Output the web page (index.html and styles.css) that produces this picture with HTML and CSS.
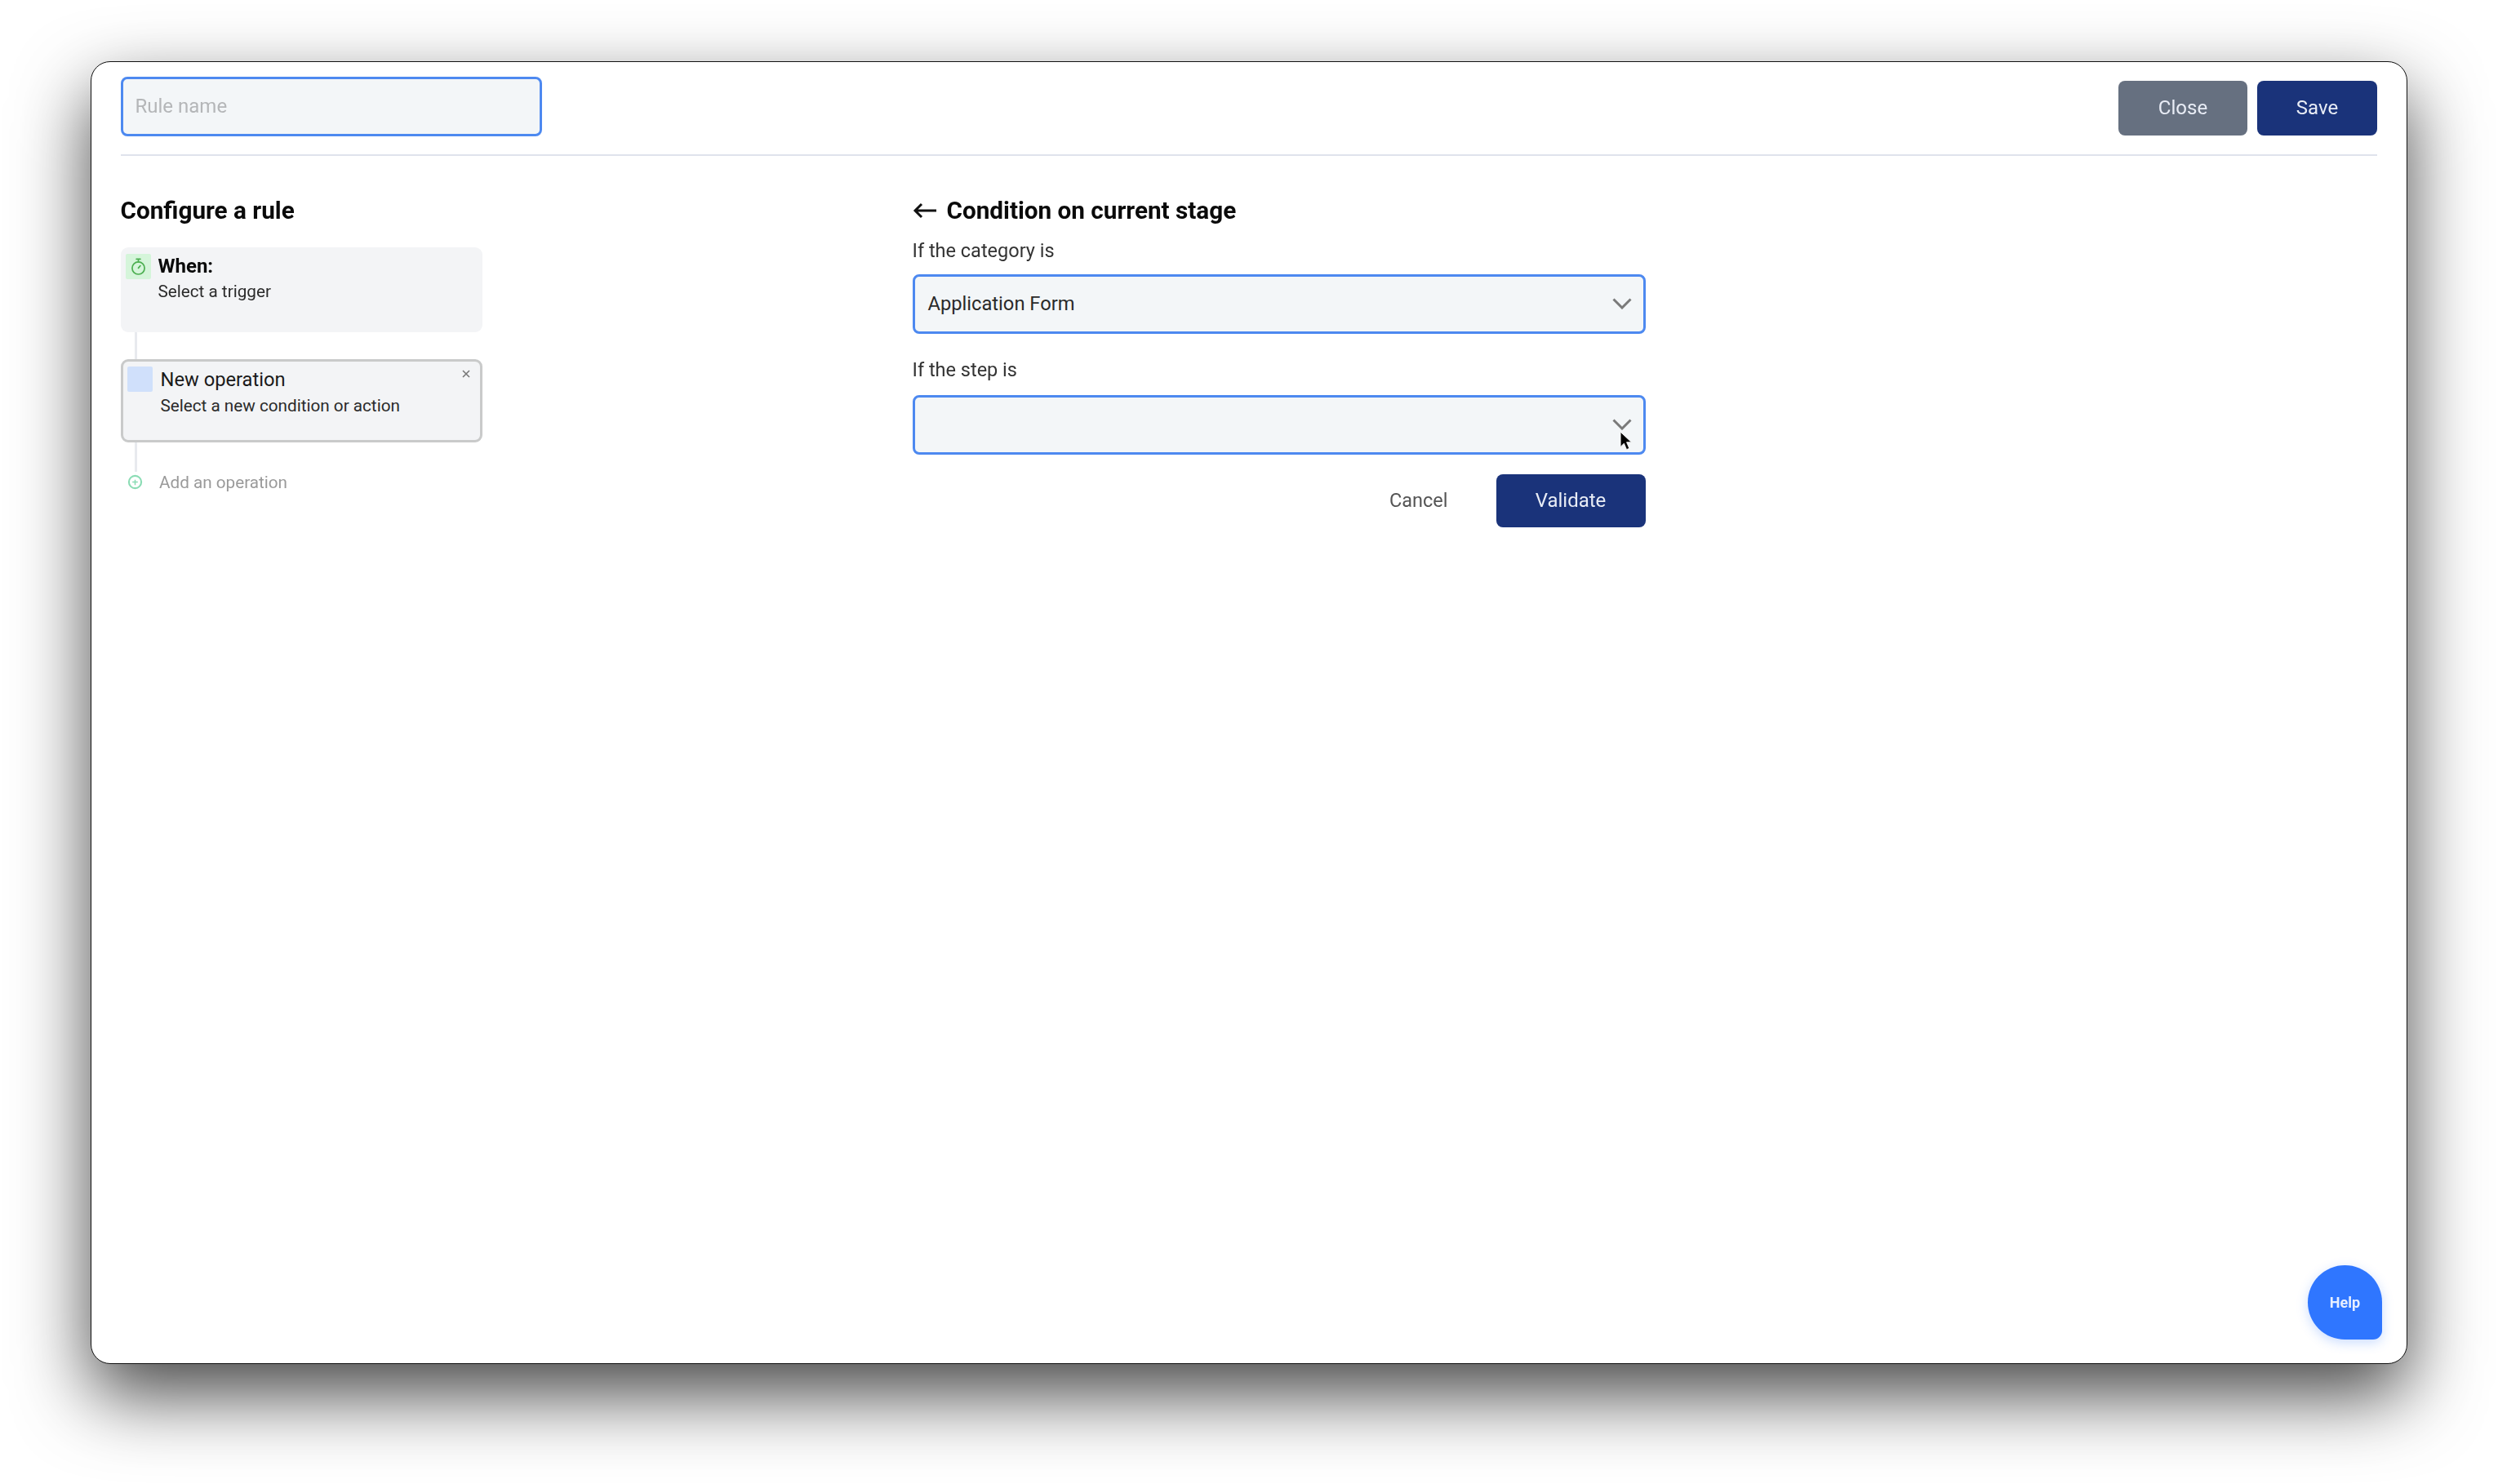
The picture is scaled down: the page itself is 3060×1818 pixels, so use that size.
FILE: index.html
```html
<!DOCTYPE html>
<html lang="en">
<head>
<meta charset="utf-8">
<title>Configure a rule</title>
<link rel="stylesheet" href="styles.css">
</head>
<body>
<div class="window">
  <header class="topbar">
    <div class="rule-input">Rule name</div>
    <div class="top-actions">
      <button class="btn btn-grey">Close</button>
      <button class="btn btn-navy btn-save">Save</button>
    </div>
  </header>
  <main class="content">
    <section class="left">
      <h2 class="heading">Configure a rule</h2>
      <div class="card card-when">
        <span class="icon-box icon-green">
          <svg viewBox="0 0 20 22" width="19" height="21" fill="none" stroke="#4caf50" stroke-width="1.8" stroke-linecap="round"><circle cx="10" cy="13" r="8"/><path d="M7.500 1.500h5M10 1.500V5M10 13l2.500-3"/></svg>
        </span>
        <div class="card-text">
          <div class="card-title-bold">When:</div>
          <div class="card-sub">Select a trigger</div>
        </div>
      </div>
      <div class="connector connector-a"></div>
      <div class="card card-new">
        <span class="icon-box icon-blue"></span>
        <div class="card-text">
          <div class="card-title">New operation</div>
          <div class="card-sub card-sub-new">Select a new condition or action</div>
        </div>
        <svg class="close-x" viewBox="0 0 10 10" width="10" height="10" fill="none" stroke="#777" stroke-width="1.6"><path d="M1 1l8 8M9 1l-8 8"/></svg>
      </div>
      <div class="connector connector-b"></div>
      <div class="add-row">
        <svg class="add-icon" viewBox="0 0 20 20" width="19" height="19" fill="none" stroke="#8adcb4" stroke-width="2.2"><circle cx="10" cy="10" r="8"/><path d="M10 14V7M6.500 10h7" stroke-width="1.600"/></svg>
        <span class="add-text">Add an operation</span>
      </div>
    </section>
    <section class="right">
      <h2 class="heading heading-back">
        <svg class="back" viewBox="0 0 30 20" width="30" height="20" fill="none" stroke="#111" stroke-width="3"><path d="M29 10H3M11 2l-8 8 8 8"/></svg>
        Condition on current stage
      </h2>
      <label class="field-label label-first">If the category is</label>
      <div class="select">
        <span>Application Form</span>
        <svg class="chev" viewBox="0 0 24 14" width="24" height="14" fill="none" stroke="#7a7a7a" stroke-width="3"><path d="M1.500 1.500L12 12 22.500 1.500"/></svg>
      </div>
      <label class="field-label label-second">If the step is</label>
      <div class="select">
        <span></span>
        <svg class="chev" viewBox="0 0 24 14" width="24" height="14" fill="none" stroke="#7a7a7a" stroke-width="3"><path d="M1.500 1.500L12 12 22.500 1.500"/></svg>
        <svg class="cursor" viewBox="0 0 14 22" width="15" height="24"><path d="M1 0v17l4-4 3 7 3-1.300-3-7h5.500z" fill="#000" stroke="#fff" stroke-width=".8"/></svg>
      </div>
      <div class="form-actions">
        <button class="btn btn-plain">Cancel</button>
        <button class="btn btn-navy btn-validate">Validate</button>
      </div>
    </section>
  </main>
  <button class="help">Help</button>
</div>
</body>
</html>
```
FILE: styles.css
```css
* { box-sizing: border-box; }
html, body { margin: 0; height: 100%; }
body {
  background: #fff;
  padding: 75px 0 0 111px;
  font-family: Roboto, "Liberation Sans", sans-serif;
  color: #111;
  overflow: hidden;
}
.window {
  position: relative;
  width: 2838px;
  height: 1596px;
  background: #fff;
  border: 1.5px solid #111;
  border-radius: 24px;
  box-shadow: 0 38px 90px rgba(0, 0, 0, .72);
  padding: 17.5px 36px 0 35.5px;
}
.topbar, .content, .help { filter: blur(.6px); }
.topbar {
  display: flex;
  justify-content: space-between;
  align-items: flex-start;
  height: 97px;
  border-bottom: 2px solid #dfe3ec;
}
.rule-input {
  width: 516px;
  height: 73px;
  background: #f3f6f8;
  border: 3.5px solid #4d89f0;
  border-radius: 8px;
  padding-left: 15px;
  line-height: 66px;
  font-size: 24px;
  color: #b4b6b8;
}
.top-actions { display: flex; gap: 12px; padding-top: 5px; }
.btn {
  font-family: inherit;
  font-size: 24px;
  border: 0;
  border-radius: 8px;
  color: #e8ecf5;
  height: 67px;
  padding: 0;
}
.btn-grey { width: 158px; background: #667080; }
.btn-navy { background: #1a337a; }
.btn-save { width: 147px; }
.content { display: flex; padding-top: 48px; }
.left { width: 970px; }
.right { width: 898px; }
.heading {
  margin: 0;
  font-size: 29.700px;
  line-height: 38px;
  font-weight: 700;
  color: #0a0a0a;
}
.heading-back { display: flex; align-items: center; gap: 12px; }
.card {
  position: relative;
  display: flex;
  width: 443px;
  background: #f3f4f6;
  border-radius: 9px;
}
.card-when { height: 104px; margin-top: 26px; padding: 8px 6px; gap: 9px; }
.card-new { height: 102px; border: 3px solid #c9caca; padding: 6px 5px; gap: 10px; }
.icon-box {
  flex: none;
  display: flex;
  align-items: center;
  justify-content: center;
  width: 31px;
  height: 31px;
  border-radius: 2px;
}
.icon-green { background: #d5f5da; }
.icon-blue { background: #d0e0fb; }
.card-title-bold { font-size: 24px; line-height: 30px; font-weight: 700; color: #0a0a0a; }
.card-title { font-size: 23.700px; line-height: 32px; color: #1a1a1a; }
.card-sub { font-size: 20.700px; line-height: 30px; margin-top: 1px; color: #2b2b2b; }
.card-sub-new { margin-top: 1px; }
.close-x { position: absolute; top: 10px; right: 12px; }
.connector { width: 3px; margin-left: 17.500px; background: #e8eaee; }
.connector-a { height: 33px; }
.connector-b { height: 36px; }
.add-row { display: flex; align-items: center; gap: 20px; margin: -2px 0 0 8.500px; line-height: 30px; }
.add-icon { flex: none; }
.add-text { font-size: 20.700px; color: #9a9a9a; }
.field-label { display: block; font-size: 23.500px; line-height: 30px; color: #333; }
.label-first { margin-top: 15px; margin-bottom: 14px; }
.label-second { margin-top: 29px; margin-bottom: 16px; }
.select {
  position: relative;
  display: flex;
  align-items: center;
  justify-content: space-between;
  height: 73px;
  background: #f3f6f8;
  border: 3.5px solid #4d89f0;
  border-radius: 8px;
  padding: 0 14px 0 16px;
  font-size: 23.700px;
  color: #2a2a2a;
}
.cursor { position: absolute; right: 14px; top: 42px; }
.form-actions { display: flex; justify-content: flex-end; align-items: center; gap: 59px; margin-top: 23px; }
.btn-plain { background: none; color: #555; width: auto; font-size: 23.500px; }
.btn-validate { width: 183px; height: 65px; }
.help {
  position: absolute;
  right: 30px;
  bottom: 29px;
  width: 91px;
  height: 91px;
  border: 0;
  border-radius: 50% 50% 11px 50%;
  background: #2f76ff;
  color: #e6eeff;
  font-family: inherit;
  font-size: 18px;
  font-weight: 700;
  box-shadow: 0 4px 14px rgba(47, 118, 255, .25);
}
```
